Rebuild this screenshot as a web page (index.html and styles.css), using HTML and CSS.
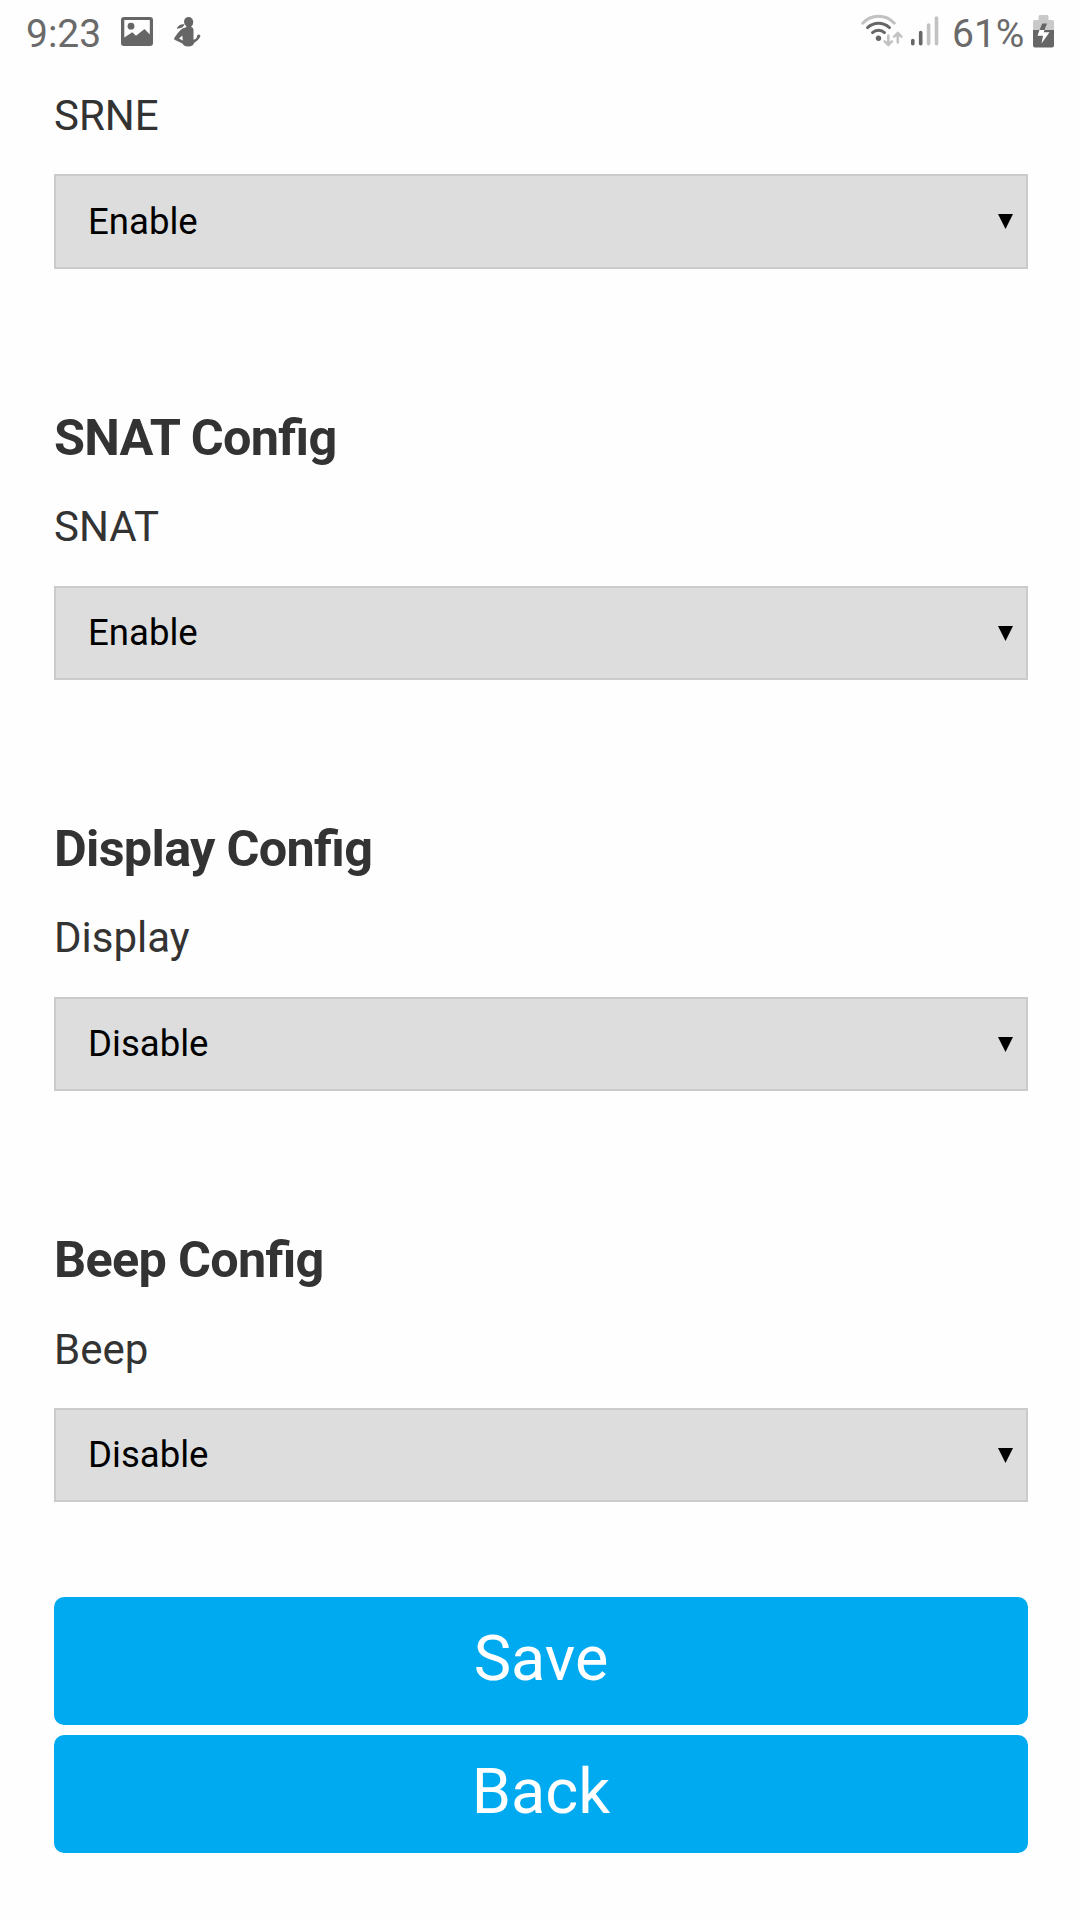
FILE: index.html
```html
<!DOCTYPE html>
<html lang="en">
<head>
<meta charset="utf-8">
<title>Config</title>
<link rel="stylesheet" href="styles.css">
</head>
<body>
<header class="status">
  <div class="status-group">
    <span class="time">9:23</span>
    <svg class="icon-image" width="32" height="30" viewBox="0 0 32 30">
      <path fill="#666" fill-rule="evenodd" d="M3 0H29Q32 0 32 3V26Q32 29 29 29H3Q0 29 0 26V3Q0 0 3 0ZM3.3 3V20.5L11.3 15.3L15 18.7L23.5 12L28.8 17.6V3Z"/>
      <circle cx="10" cy="9.2" r="3.4" fill="#666"/>
    </svg>
    <svg class="icon-figure" width="28" height="30" viewBox="0 0 28 30">
      <path fill="#666" d="M10 4.500Q10.500 0 14.500 0T19.200 4.500Q19.500 8 17.300 9.200V10Q19.500 10.700 19.500 13V22.800Q22.800 22.500 23.200 18.600Q23.800 17.200 25.500 17.800Q27 18.500 25.900 20.300Q24.600 23.500 20 26Q19.500 29.400 14.200 29.400Q9.600 29.400 8.500 26.500L1 23Q-.6 22 .8 20.200Q3.500 16 6.800 12.800Q8.500 10.800 12.300 10.300V9.200Q10 8 10 4.500ZM8.300 18.500L5 21.500L8.800 23.500Z" fill-rule="evenodd"/>
      <path fill="#666" d="M2.700 11.800Q4.500 6.800 10.500 7.300Q9.500 11.500 2.700 11.800Z"/>
    </svg>
  </div>
  <div class="status-group">
    <svg class="icon-wifi" width="42" height="33" viewBox="0 0 42 33">
      <g fill="none" stroke-width="2.900" stroke-linecap="round">
        <path stroke="#c2c2c2" d="M1.700 9.200Q8 2.200 17.500 2.200T33.300 9.200"/>
        <path stroke="#666" d="M6.500 13.600Q11.500 9.300 17.500 9.300T28.500 13.600"/>
        <path stroke="#666" d="M11.500 18.600Q14 16.300 17.500 16.300T23.500 18.600"/>
        <path stroke="#c2c2c2" stroke-width="2.600" d="M27.300 21.500V30.500M23.700 27.300L27.300 30.900L30.900 27.300M36.800 28.500V19.500M33.200 22.600L36.800 19L40.400 22.600"/>
      </g>
      <circle cx="17.500" cy="24.300" r="2.700" fill="#666"/>
    </svg>
    <svg class="icon-signal" width="28" height="30" viewBox="0 0 28 30">
      <g fill="none" stroke-width="3.600" stroke-linecap="round">
        <path stroke="#666" d="M1.800 24.500V27.700M9.700 16.500V27.700"/>
        <path stroke="#c2c2c2" d="M17.600 9V27.700M25.500 2V27.700"/>
      </g>
    </svg>
    <span class="battery-level">61%</span>
    <svg class="icon-battery" width="21" height="33" viewBox="0 0 21 33">
      <path fill="#c9c9c9" d="M7 0H14Q15.500 0 15.500 1.500V5H19Q21 5 21 7V16H0V7Q0 5 2 5H5.500V1.500Q5.500 0 7 0Z"/>
      <path fill="#666" d="M0 15H21V30.500Q21 32.500 19 32.500H2Q0 32.500 0 30.500ZM9.300 8.500H14L11.500 15H6.500Z"/>
      <path fill="#fff" d="M6.500 15H11.500L10.600 17.300H16.500L8.500 28.500L10 20.800H4.500Z"/>
    </svg>
  </div>
</header>
<main class="form">
  <section class="field">
    <label class="label" for="srne">SRNE</label>
    <div class="picker">
      <select class="select" id="srne"><option>Enable</option><option>Disable</option></select>
      <svg class="arrow" width="15" height="15" viewBox="0 0 15 15"><path d="M0 0H15L7.500 15Z"/></svg>
    </div>
  </section>
  <section class="field">
    <h2 class="heading">SNAT Config</h2>
    <label class="label" for="snat">SNAT</label>
    <div class="picker">
      <select class="select" id="snat"><option>Enable</option><option>Disable</option></select>
      <svg class="arrow" width="15" height="15" viewBox="0 0 15 15"><path d="M0 0H15L7.500 15Z"/></svg>
    </div>
  </section>
  <section class="field">
    <h2 class="heading">Display Config</h2>
    <label class="label" for="display">Display</label>
    <div class="picker">
      <select class="select" id="display"><option>Disable</option><option>Enable</option></select>
      <svg class="arrow" width="15" height="15" viewBox="0 0 15 15"><path d="M0 0H15L7.500 15Z"/></svg>
    </div>
  </section>
  <section class="field">
    <h2 class="heading">Beep Config</h2>
    <label class="label label-beep" for="beep">Beep</label>
    <div class="picker">
      <select class="select" id="beep"><option>Disable</option><option>Enable</option></select>
      <svg class="arrow" width="15" height="15" viewBox="0 0 15 15"><path d="M0 0H15L7.500 15Z"/></svg>
    </div>
  </section>
  <div class="actions">
    <button class="button button-save" type="button">Save</button>
    <button class="button button-back" type="button">Back</button>
  </div>
</main>
</body>
</html>
```
FILE: styles.css
```css
* {
  box-sizing: border-box;
}

body {
  margin: 0;
  min-height: 1920px;
  background: #fefefe;
  color: #333;
  font-family: Roboto, "Liberation Sans", sans-serif;
}

.status {
  display: flex;
  justify-content: space-between;
  height: 86px;
  padding: 0 26px;
  color: #6a6a6a;
  font-size: 39px;
  line-height: 68px;
}

.status-group {
  display: flex;
  align-items: flex-start;
}

.time {
  width: 95px;
}

.icon-image {
  margin-top: 17px;
}

.icon-figure {
  margin: 17px 0 0 21px;
}

.icon-wifi {
  margin-top: 14px;
}

.icon-signal {
  margin: 16px 13px 0 8px;
}

.battery-level {
  width: 81px;
}

.icon-battery {
  margin: 15px 0 0;
}

.form {
  padding: 0 52px 0 54px;
}

.field {
  display: flex;
  flex-direction: column;
  gap: 29px;
  margin-bottom: 139px;
}

.field:first-child {
  gap: 28px;
}

.field:first-child .picker {
  height: 95px;
}

.heading {
  margin: 0;
  font-size: 50.4px;
  font-weight: 700;
  font-feature-settings: "liga" 1;
  letter-spacing: -0.7px;
  line-height: 60px;
}

.label {
  font-size: 42px;
  line-height: 60px;
}

.label-beep {
  padding-top: 1px;
  margin-bottom: -1px;
}

.picker {
  position: relative;
  height: 94px;
}

.select {
  display: block;
  width: 100%;
  height: 100%;
  padding: 0 32px 2px;
  border: 2px solid #cbcbcb;
  border-radius: 0;
  appearance: none;
  background: #ddd;
  color: #000;
  font: 36.6px Roboto, "Liberation Sans", sans-serif;
}

.field:first-child .select {
  padding-bottom: 0;
}

.arrow {
  position: absolute;
  top: 40px;
  right: 15px;
}

.actions {
  display: flex;
  flex-direction: column;
  gap: 10px;
  margin-top: -44px;
}

.button {
  padding: 0 0 5px;
  border: 0;
  border-radius: 10px;
  background: #00aaf0;
  color: #fff;
  font: 63px Roboto, "Liberation Sans", sans-serif;
}

.button-save {
  height: 128px;
}

.button-back {
  height: 118px;
}
```
